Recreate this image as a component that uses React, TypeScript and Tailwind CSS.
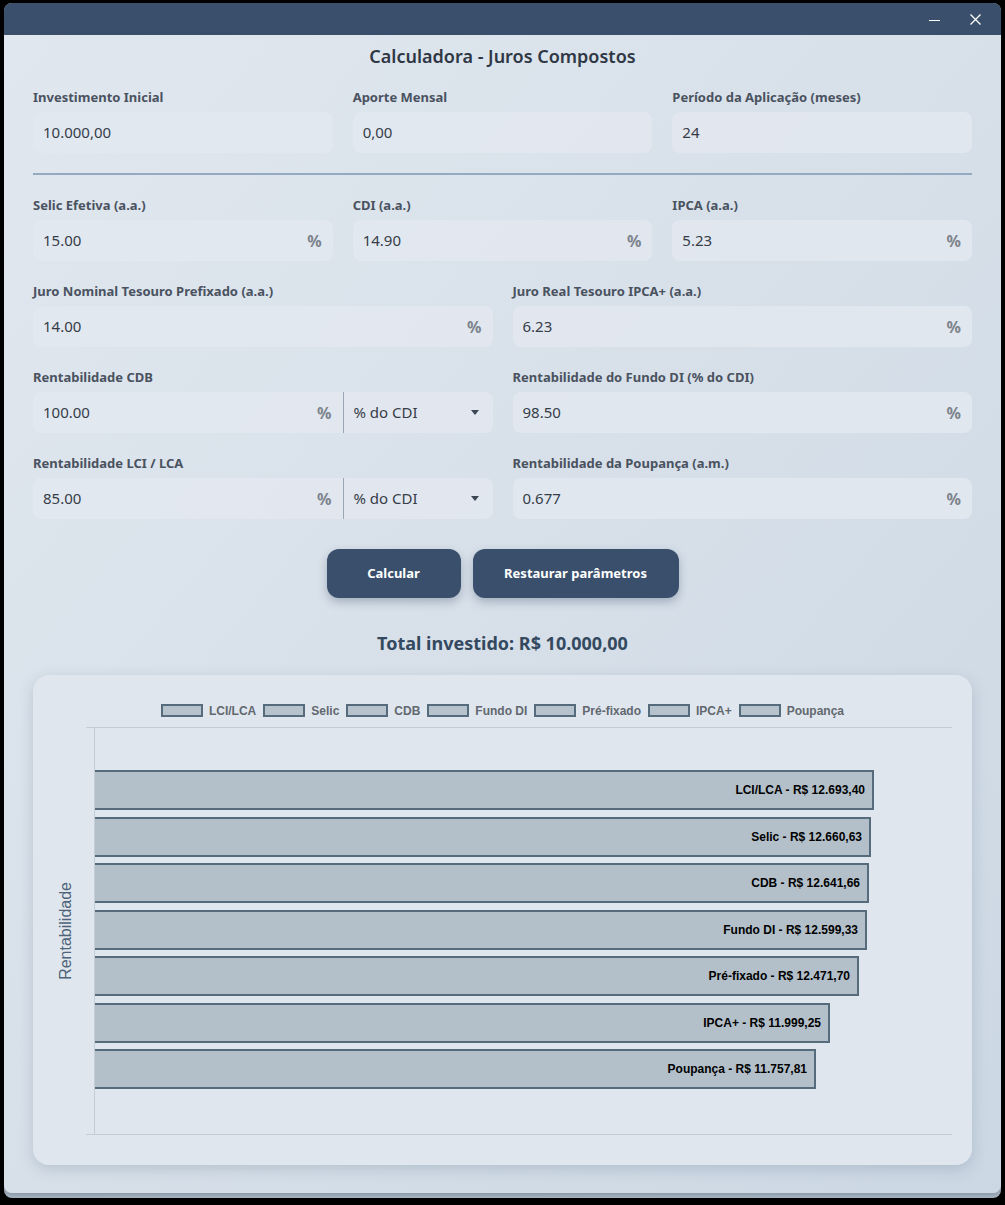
import React from "react";

const ui = { fontFamily: '"Noto Sans", "Open Sans", sans-serif' };
const arial = { fontFamily: '"Liberation Sans", Arial, sans-serif' };

type FieldProps = { label: string; value: string; suffix?: boolean; select?: boolean };

const Field: React.FC<FieldProps> = ({ label, value, suffix, select }) => (
  <div className="flex flex-col">
    <label className="text-[13px] font-bold text-[#4a5260] leading-[18px] mb-[6px]">{label}</label>
    <div className="flex h-[41px] rounded-[8px] bg-[#e2e8f0]/90 overflow-hidden">
      <div className="flex flex-1 items-center pl-[10px] pr-[11px]">
        <span className="flex-1 text-[15px] text-[#363d48]">{value}</span>
        {suffix && <span className="text-[16px] font-bold text-[#7c838c]">%</span>}
      </div>
      {select && (
        <div className="flex w-[150px] items-center border-l border-[#9aa6b3] pl-[10px] pr-[14px]">
          <span className="flex-1 text-[15px] text-[#363d48]">% do CDI</span>
          <svg width="8" height="5" viewBox="0 0 8 5">
            <path d="M0 0h8L4 5z" fill="#3d4654" />
          </svg>
        </div>
      )}
    </div>
  </div>
);

const bars = [
  { name: "LCI/LCA", value: "12.693,40", end: 873 },
  { name: "Selic", value: "12.660,63", end: 870 },
  { name: "CDB", value: "12.641,66", end: 868 },
  { name: "Fundo DI", value: "12.599,33", end: 866 },
  { name: "Pré-fixado", value: "12.471,70", end: 858 },
  { name: "IPCA+", value: "11.999,25", end: 829 },
  { name: "Poupança", value: "11.757,81", end: 815 },
];

const Chart: React.FC = () => (
  <div className="mt-[19px] h-[490px] rounded-[16px] bg-[#dfe6ee] shadow-[0_4px_14px_rgba(90,110,135,0.25)] pl-[20px] pr-[20px] pt-[27px]" style={arial}>
    <div className="flex justify-center items-center gap-[7px] text-[12px] font-bold text-[#62686f] h-[17px]">
      {bars.map((b) => (
        <div key={b.name} className="flex items-center gap-[6px]">
          <span className="w-[42px] h-[13px] border-2 border-[#566c7c] bg-[#b6c2cc]" />
          <span>{b.name}</span>
        </div>
      ))}
    </div>
    <div className="flex mt-[8px] h-[408px]">
      <div className="w-[33px] flex items-center justify-start pl-[1px]">
        <span className="[writing-mode:vertical-rl] rotate-180 whitespace-nowrap text-[16px] text-[#4e6378]">Rentabilidade</span>
      </div>
      <div className="flex-1 border-t border-b border-[#c4ccd6] pl-[8px]">
        <div className="h-full border-l border-[#c4ccd6] pt-[42px] flex flex-col gap-[6.5px]">
          {bars.map((b) => (
            <div
              key={b.name}
              className="h-[40px] flex items-center justify-end pr-[7px] border-2 border-l-0 border-[#566c7c] bg-[#b3c0ca] text-[12px] font-bold text-black"
              style={{ width: b.end - 94 + "px" }}
            >
              {b.name} - R$ {b.value}
            </div>
          ))}
        </div>
      </div>
    </div>
  </div>
);

const App: React.FC = () => {
  return (
    <div className="min-h-screen bg-black pt-[3px] px-[4px]" style={ui}>
      <div className="w-[997px] h-[1195px] rounded-[8px] overflow-hidden flex flex-col bg-[#a9b5c2]">
        <div className="h-[32px] bg-[#3a4f6b] flex items-center justify-end pr-[20px] gap-[30px] shrink-0">
          <span className="block w-[11px] h-[1px] bg-white mt-[3px]" />
          <svg width="11" height="11" viewBox="0 0 11 11" className="mt-[1px]">
            <path d="M0.5 0.5l10 10M10.5 0.5l-10 10" stroke="white" strokeWidth="1.3" />
          </svg>
        </div>
        <div className="h-[1158px] rounded-b-[8px] bg-gradient-to-br from-[#e0e7ef] via-[#d7e0e9] to-[#cbd7e3] px-[29px] pt-[9px] shadow-[0_2px_4px_rgba(60,80,100,0.3)]">
          <h1 className="text-center text-[18px] font-semibold text-[#2f3744] leading-[24px]">Calculadora - Juros Compostos</h1>

          <div className="grid grid-cols-3 gap-x-[20px] mt-[20px]">
            <Field label="Investimento Inicial" value="10.000,00" />
            <Field label="Aporte Mensal" value="0,00" />
            <Field label="Período da Aplicação (meses)" value="24" />
          </div>

          <div className="h-[2px] bg-[#95a9c0] mt-[20px] mb-[21px]" />

          <div className="grid grid-cols-3 gap-x-[20px]">
            <Field label="Selic Efetiva (a.a.)" value="15.00" suffix />
            <Field label="CDI (a.a.)" value="14.90" suffix />
            <Field label="IPCA (a.a.)" value="5.23" suffix />
          </div>

          <div className="grid grid-cols-2 gap-x-[20px] gap-y-[21px] mt-[21px]">
            <Field label="Juro Nominal Tesouro Prefixado (a.a.)" value="14.00" suffix />
            <Field label="Juro Real Tesouro IPCA+ (a.a.)" value="6.23" suffix />
            <Field label="Rentabilidade CDB" value="100.00" suffix select />
            <Field label="Rentabilidade do Fundo DI (% do CDI)" value="98.50" suffix />
            <Field label="Rentabilidade LCI / LCA" value="85.00" suffix select />
            <Field label="Rentabilidade da Poupança (a.m.)" value="0.677" suffix />
          </div>

          <div className="flex justify-center gap-[12px] mt-[30px]">
            <button className="h-[49px] w-[134px] rounded-[12px] bg-[#3a4f6b] text-white text-[13px] font-bold shadow-[0_4px_10px_rgba(40,60,90,0.3)]">
              Calcular
            </button>
            <button className="h-[49px] w-[206px] rounded-[12px] bg-[#3a4f6b] text-white text-[13px] font-bold shadow-[0_4px_10px_rgba(40,60,90,0.3)]">
              Restaurar parâmetros
            </button>
          </div>

          <p className="text-center text-[18px] font-bold text-[#34495f] mt-[32px] leading-[26px]">Total investido: R$ 10.000,00</p>

          <Chart />
        </div>
      </div>
    </div>
  );
};

export default App;
